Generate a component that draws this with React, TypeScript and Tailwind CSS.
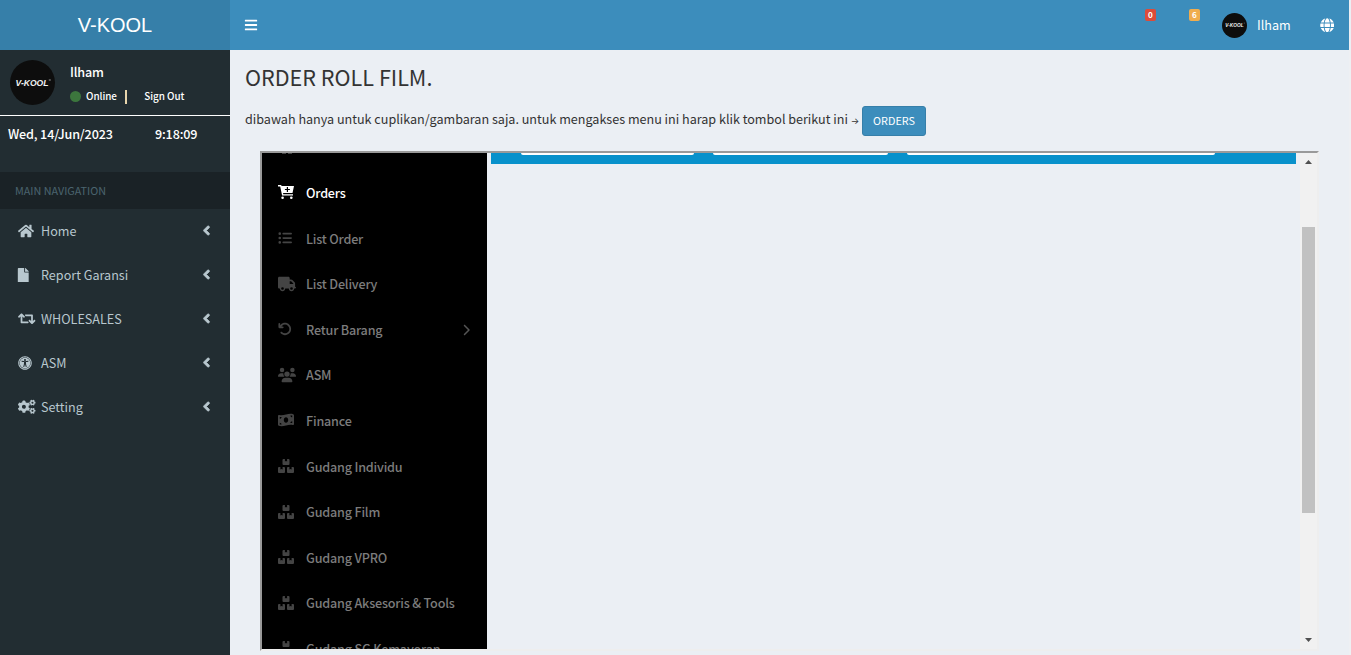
import type { ReactNode } from "react";
import type { IconType } from "react-icons";
import { FaAngleLeft, FaBars, FaCogs, FaFile, FaGlobe, FaHome, FaRetweet, FaUniversalAccess } from "react-icons/fa";
import { FaArrowRotateLeft, FaChevronRight, FaListUl, FaMoneyBillWave, FaTruck, FaUsers } from "react-icons/fa6";

function CartIcon({ size = 16 }: { size?: number | string }) {
  return (
    <svg width={size} height={size} viewBox="0 0 16 16">
      <path d="M0 1h3.2l.3 1H16l-1.5 7H5l.3 1.2H15v1.3H4.1L2.2 2.4H0z" fill="currentColor" />
      <path d="M9.4 3v5M6.9 5.5h5" stroke="#000" strokeWidth="1.2" />
      <circle cx="4.6" cy="13.8" r="1.3" fill="currentColor" />
      <circle cx="13.3" cy="13.8" r="1.3" fill="currentColor" />
    </svg>
  );
}

function BoxesIcon({ size = 16 }: { size?: number | string }) {
  return (
    <svg width={size} height={size} viewBox="0 0 16 16" fill="currentColor">
      <path d="M5.5 1h1.4v2.5l1.1-.6 1.1.6V1h1.4q1 0 1 1v4q0 1-1 1h-5q-1 0-1-1V2q0-1 1-1z" />
      <path d="M1 9h1.4v2.5l1.1-.6 1.1.6V9H6q1 0 1 1v4q0 1-1 1H1q-1 0-1-1v-4q0-1 1-1z" />
      <path d="M10 9h1.4v2.5l1.1-.6 1.1.6V9H15q1 0 1 1v4q0 1-1 1h-5q-1 0-1-1v-4q0-1 1-1z" />
    </svg>
  );
}

const navItems: { label: string; icon: IconType; size: number; shift?: string }[] = [
  { label: "Home", icon: FaHome, size: 16 },
  { label: "Report Garansi", icon: FaFile, size: 14.5, shift: "-ml-[2px]" },
  { label: "WHOLESALES", icon: FaRetweet, size: 17.5 },
  { label: "ASM", icon: FaUniversalAccess, size: 14 },
  { label: "Setting", icon: FaCogs, size: 17.5 },
];

const frameItems: { label: string; icon: IconType | typeof CartIcon; size: number; active?: boolean; more?: boolean }[] = [
  { label: "Orders", icon: CartIcon, size: 16, active: true },
  { label: "List Order", icon: FaListUl, size: 14 },
  { label: "List Delivery", icon: FaTruck, size: 18 },
  { label: "Retur Barang", icon: FaArrowRotateLeft, size: 14, more: true },
  { label: "ASM", icon: FaUsers, size: 18 },
  { label: "Finance", icon: FaMoneyBillWave, size: 16 },
  { label: "Gudang Individu", icon: BoxesIcon, size: 16 },
  { label: "Gudang Film", icon: BoxesIcon, size: 16 },
  { label: "Gudang VPRO", icon: BoxesIcon, size: 16 },
  { label: "Gudang Aksesoris & Tools", icon: BoxesIcon, size: 16 },
  { label: "Gudang SG Kemayoran", icon: BoxesIcon, size: 16 },
];

function Avatar({ small }: { small?: boolean }) {
  return (
    <div className={`flex shrink-0 items-center justify-center rounded-full bg-[#0d0d0d] ${small ? "size-[25px]" : "size-[45px]"}`}>
      <svg viewBox="0 0 36 10" className={small ? "w-5" : "w-9"}>
        <text x="0.5" y="8.2" textLength="33" lengthAdjust="spacingAndGlyphs" fill="#f2f2f2" fontSize="9.2" fontWeight="700" fontStyle="italic" fontFamily="Liberation Sans, sans-serif">V-KOOL</text>
        <path d="M33.8 2h2" stroke="#bbb" strokeWidth=".8" />
      </svg>
    </div>
  );
}

function Badge({ color, children }: { color: string; children: ReactNode }) {
  return (
    <span className={`flex h-3 w-[11px] items-center justify-center rounded-[2px] text-[8.1px] font-bold leading-none text-white ${color}`}>{children}</span>
  );
}

function Sidebar() {
  return (
    <aside className="w-[230px] shrink-0 bg-[#222d32] text-white">
      <div className="flex h-[66px] border-b border-white pl-[10px] pt-[10px]">
        <Avatar />
        <div className="ml-[15px]">
          <div className="h-[25px] text-[12.6px] font-medium leading-[24px] tracking-[-0.15px]">Ilham</div>
          <div className="flex h-[24px] items-center text-[9.9px] font-medium leading-none tracking-[-0.05px]">
            <span className="-mt-[2px] size-[11px] rounded-full bg-[#3c763d]" />
            <span className="ml-[5px]">Online</span>
            <span className="ml-[8px] h-[14px] w-[2px] bg-[#e8d5ac]" />
            <span className="ml-[17.5px]">Sign Out</span>
          </div>
        </div>
      </div>
      <div className="flex h-[56px] pl-2 pt-[8px] text-[12.6px] font-medium leading-[20px] tracking-[-0.16px]">
        <span className="w-[147px]">Wed, 14/Jun/2023</span>
        <span>9:18:09</span>
      </div>
      <div className="h-[37px] bg-[#1a2226] pl-[15px] text-[10.8px] leading-[37px] text-[#4b646f]">MAIN NAVIGATION</div>
      <nav>
        {navItems.map(({ label, icon: Icon, size, shift }) => (
          <div key={label} className="flex h-11 items-center pl-[18px] pr-[16px] text-[12.6px] text-[#b8c7ce]">
            <span className="flex w-[23px] shrink-0"><Icon size={size} className={shift} /></span>
            <span className="grow">{label}</span>
            <FaAngleLeft size={15} strokeWidth={24} stroke="currentColor" className="-mt-px" />
          </div>
        ))}
      </nav>
    </aside>
  );
}

function FrameMenu() {
  return (
    <div className="h-full w-[225px] shrink-0 overflow-hidden bg-black">
      <div className="flex h-[17.6px] items-start pl-[20px]">
        <span className="h-[1px] w-[4px] bg-[#444]" />
        <span className="ml-[2px] h-[1px] w-[4px] bg-[#444]" />
      </div>
      {frameItems.map(({ label, icon: Icon, size, active, more }) => (
        <div key={label} className={`flex h-[45.6px] items-center pl-4 pr-[15px] text-[12.6px] font-medium tracking-[-0.19px] ${active ? "text-white" : "text-[#7c7c7c]"}`}>
          <span className={`mt-[-2px] flex w-[28px] shrink-0 ${active ? "text-white" : "text-[#444444]"}`}><Icon size={size} /></span>
          <span className="grow whitespace-nowrap">{label}</span>
          {more && <FaChevronRight size={12} className="text-[#555]" />}
        </div>
      ))}
    </div>
  );
}

function EmbeddedFrame() {
  return (
    <div className="ml-[15px] flex h-[500px] w-[1059px] overflow-hidden border-2 border-b-[#eeeeee] border-l-[#9a9a9a] border-r-[#eeeeee] border-t-[#9a9a9a]">
      <FrameMenu />
      <div className="ml-1 flex h-[11px] w-[805px] bg-[#0891cb] pl-[30px]">
        <span className="h-[2px] w-[173px] rounded-b-[2px] bg-white" />
        <span className="ml-[19px] h-[2px] w-[175px] rounded-b-[2px] bg-white" />
        <span className="ml-[19px] h-[2px] w-[308px] rounded-b-[2px] bg-white" />
      </div>
      <div className="ml-1 flex w-[17px] flex-col items-center bg-[#f1f1f1]">
        <svg className="mt-[7px] h-1 w-[7px] shrink-0" viewBox="0 0 7 4"><path d="M3.5 0 7 4H0z" fill="#505050" /></svg>
        <div className="mt-[63px] h-[286px] w-[13px] bg-[#c1c1c1]" />
        <svg className="mb-[7px] mt-auto h-1 w-[7px] shrink-0" viewBox="0 0 7 4"><path d="M0 0h7L3.5 4z" fill="#505050" /></svg>
      </div>
    </div>
  );
}

export default function App() {
  return (
    <div className="h-[655px] w-[1351px] overflow-hidden bg-[#ebeff4] font-['Noto_Sans_CJK_SC',sans-serif] text-[#333333]">
      <header className="flex h-[50px] w-[1349px] bg-[#3c8dbc] text-white">
        <div className="flex w-[230px] shrink-0 items-center justify-center bg-[#367fa9] font-['Liberation_Sans',Arial,sans-serif] text-[20px]">V-KOOL</div>
        <div className="flex grow items-center pl-[14px]"><FaBars size={14} /></div>
        <div className="flex w-[204px]">
          <div className="pt-[9px]"><Badge color="bg-[#dd4b39]">0</Badge></div>
          <div className="ml-[33px] pt-[9px]"><Badge color="bg-[#f0ad4e]">6</Badge></div>
          <div className="ml-[22px] flex items-center">
            <Avatar small />
            <span className="ml-[10px] text-[12.6px]">Ilham</span>
            <FaGlobe size={14.5} className="ml-[29px]" />
          </div>
        </div>
      </header>
      <div className="flex h-[605px]">
        <Sidebar />
        <main className="w-[1119px] pl-[15px]">
          <h3 className="h-[56px] pt-[11px] text-[21.6px] leading-[32px]">ORDER ROLL FILM.</h3>
          <div className="flex h-[45px] items-start">
            <p className="w-[617px] whitespace-nowrap text-[12.6px] leading-[25px] tracking-[-0.01px]">dibawah hanya untuk cuplikan/gambaran saja. untuk mengakses menu ini harap klik tombol berikut ini <span className="font-['Inter',sans-serif] text-[9px] leading-none">→</span></p>
            <button className="h-[30px] w-[64px] rounded-[3px] border border-[#367fa9] bg-[#3c8dbc] pb-px text-[10.8px] leading-none text-white">ORDERS</button>
          </div>
          <EmbeddedFrame />
        </main>
        <div className="w-[2px] bg-[#eef0f3]" />
      </div>
    </div>
  );
}
